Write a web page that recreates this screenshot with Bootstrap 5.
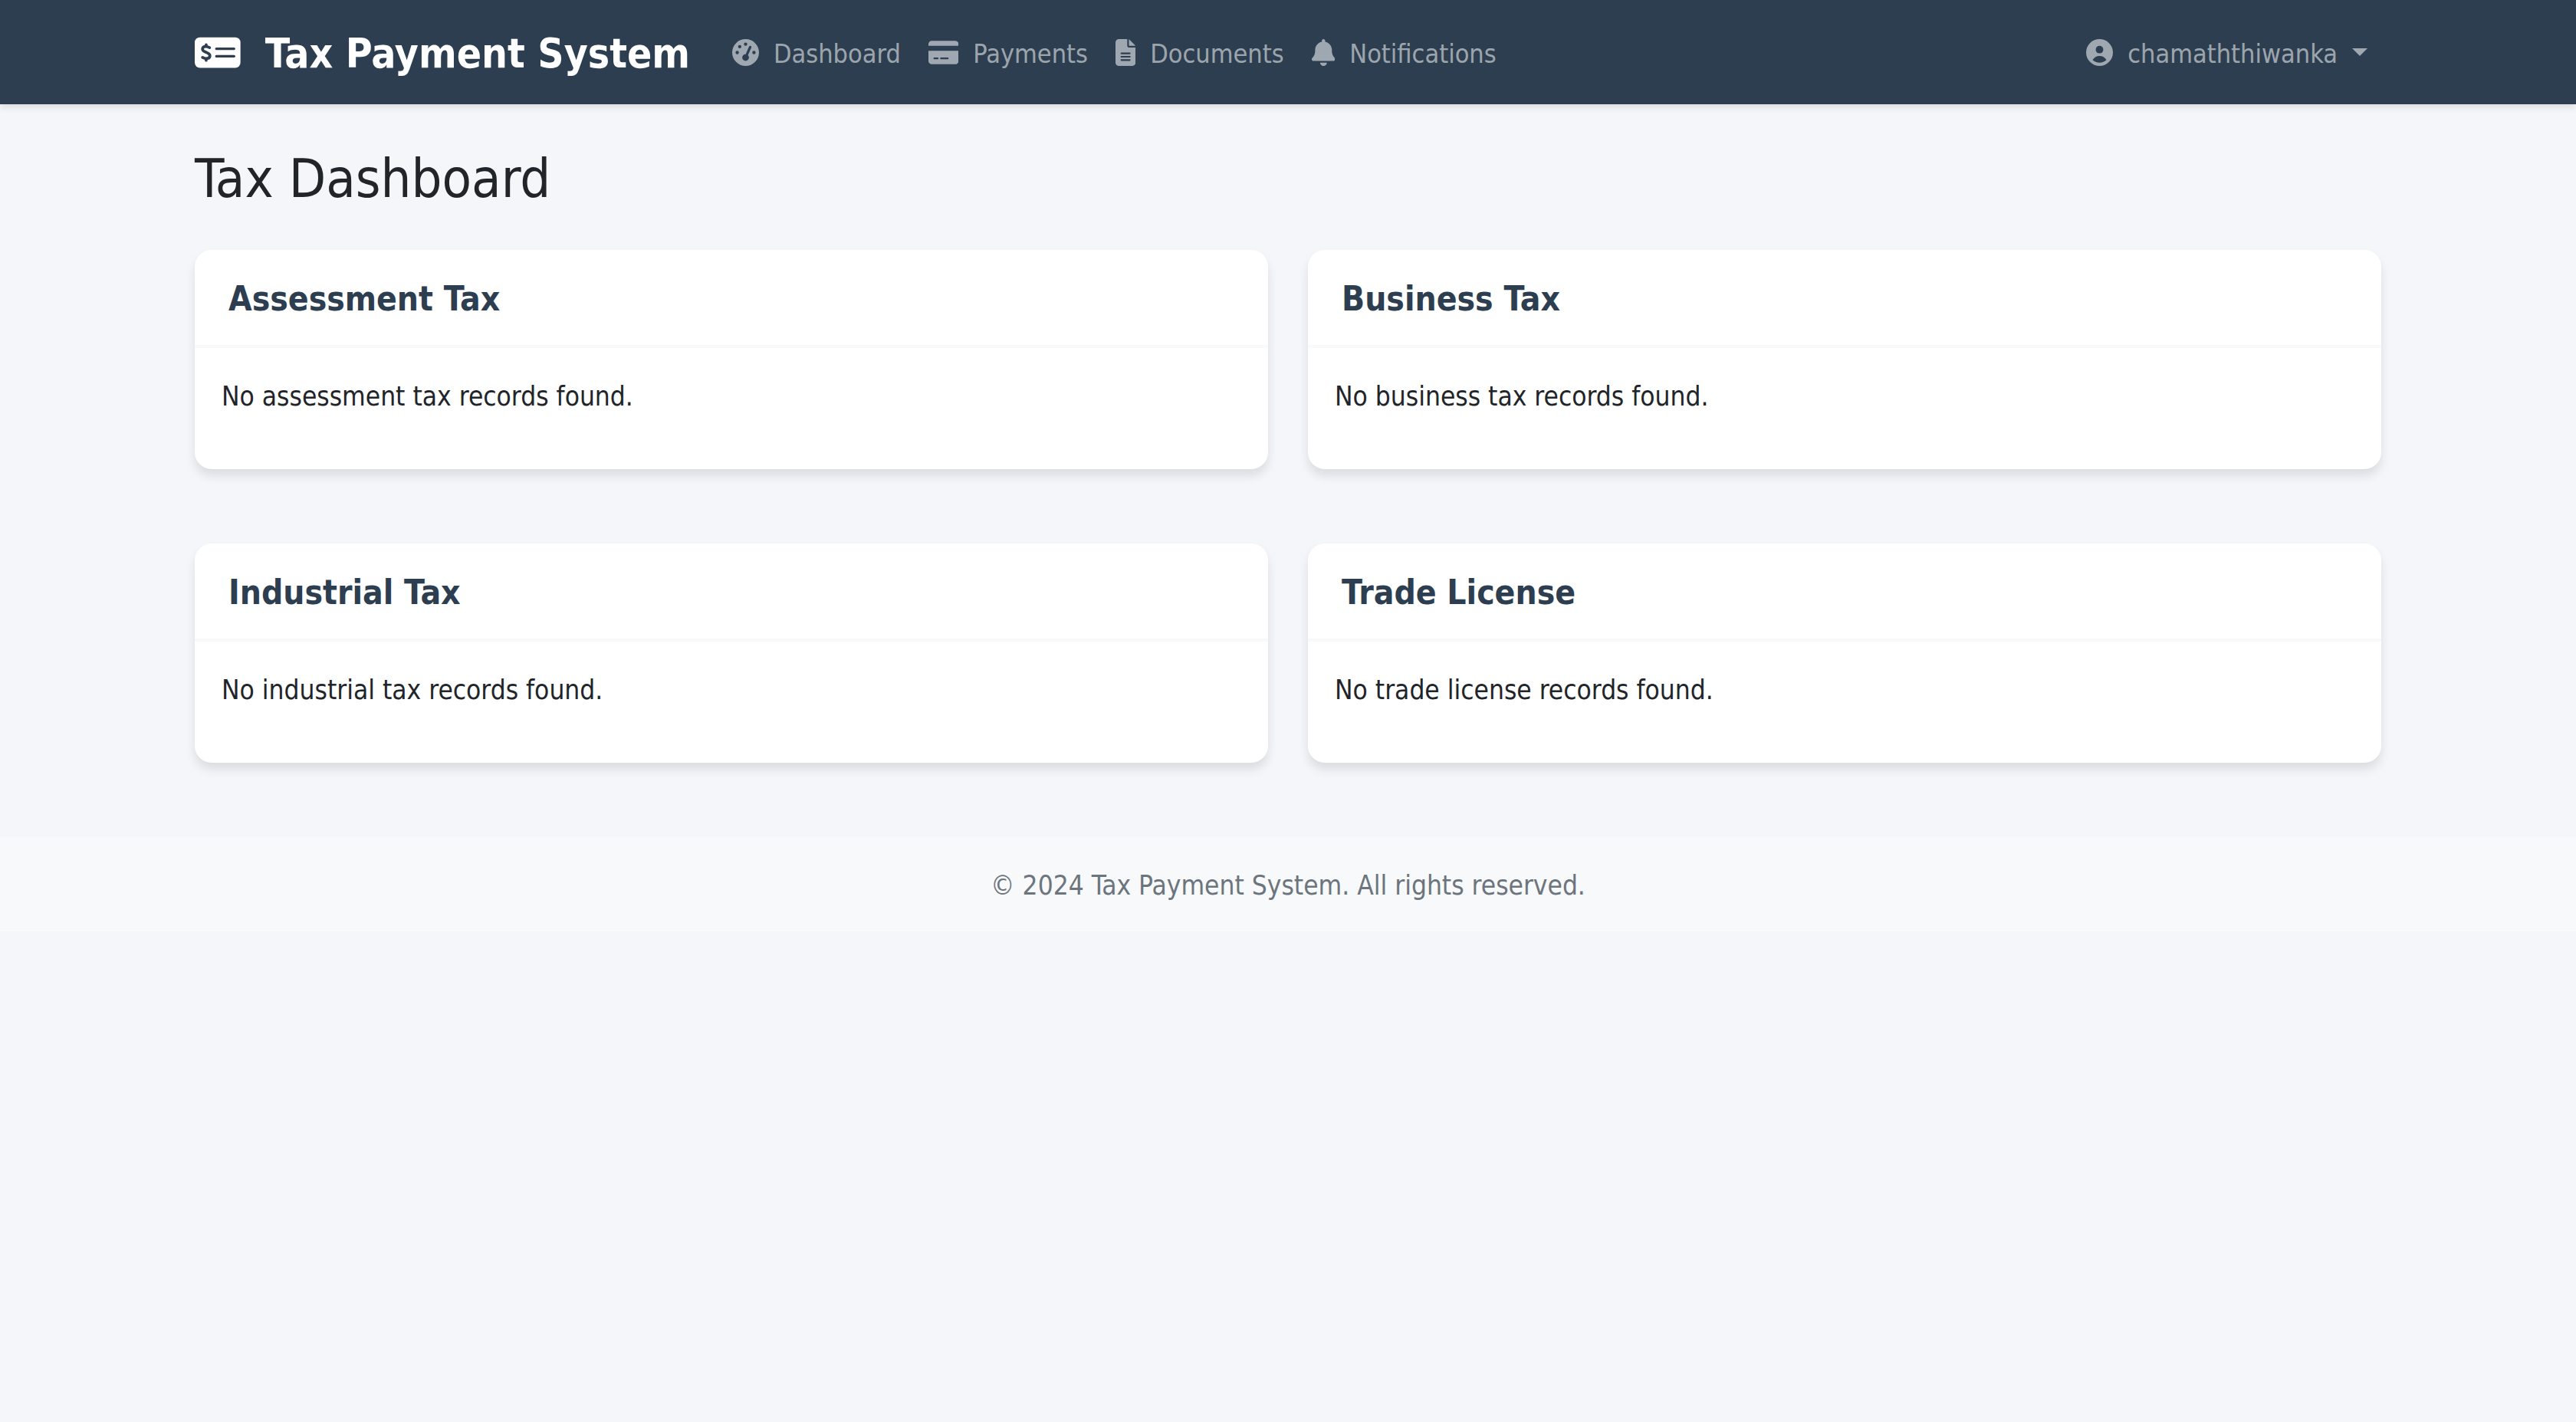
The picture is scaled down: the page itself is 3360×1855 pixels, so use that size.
<!DOCTYPE html>
<html lang="en">
<head>
<meta charset="utf-8">
<meta name="viewport" content="width=device-width, initial-scale=1">
<title>Tax Payment System</title>
<link href="https://cdn.jsdelivr.net/npm/bootstrap@5.3.0/dist/css/bootstrap.min.css" rel="stylesheet">
<script src="https://cdn.jsdelivr.net/npm/bootstrap@5.3.0/dist/js/bootstrap.bundle.min.js" defer></script>
<style>
:root { --ink: #2c3e50; }
body { font-family: "DejaVu Sans Condensed", "DejaVu Sans", sans-serif; font-size: 35px; line-height: 53px; background: #f5f6fa; }
.container { max-width: 2904px; padding-left: 26px; padding-right: 26px; }

.site-nav { --bs-navbar-color: rgba(255,255,255,.55); --bs-navbar-nav-link-padding-x: 18px; background: var(--ink); padding: 18px 0; box-shadow: 0 4px 9px rgba(0,0,0,.1); }
.site-nav .navbar-brand { font-size: 53px; line-height: 76px; font-weight: 700; padding: 10px 0; margin-right: 37px; gap: 32px; }
.site-nav .nav-link { font-size: 34px; padding-top: 16px; padding-bottom: 16px; gap: 19px; }
.site-nav a span { padding-top: 4px; }
.site-nav .dropdown-toggle::after { margin-left: 0; border-width: 10px 10px 0; }
.glyph { height: 35px; fill: currentColor; flex: none; }
.glyph-brand { height: 53px; }
.cut { fill: var(--ink); }
.cut-line { fill: none; stroke: var(--ink); stroke-linecap: round; }

.page-title { font-size: 70px; line-height: 84px; margin: 0; padding: 55px 0 51px; }
.tax-row { --bs-gutter-x: 52px; --bs-gutter-y: 97px; margin-bottom: 97px; }
.tax-card { border: 0; border-radius: 22px; box-shadow: 0 9px 13px rgba(0,0,0,.1); }
.tax-card .card-header { background: transparent; border-bottom: 4px solid #f8f9fa; padding: 37px 44px 34px; }
.tax-card .card-title { color: var(--ink); font-size: 44px; line-height: 53px; font-weight: 700; margin: 0; }
.tax-card .card-body { padding: 37px 35px 33px; color: #212529; }
.tax-card p { margin-bottom: 35px; }
.site-footer { background: #f8f9fa; color: #6c757d; padding: 37px 0 33px; }
</style>
</head>
<body>
<nav class="navbar navbar-expand-lg navbar-dark site-nav">
  <div class="container">
    <a class="navbar-brand d-flex align-items-center" href="#">
      <svg class="glyph glyph-brand" viewBox="0 0 576 512" aria-hidden="true">
        <rect y="64" width="576" height="384" rx="64"/>
        <path class="cut-line" stroke-width="31" d="M272 208H496M272 304H496"/>
        <path class="cut-line" stroke-width="36" d="M144 158v18M144 336v18M187 194C166 184 155 180 142 180C88 180 84 228 128 246L158 260C208 280 200 332 145 332C128 332 112 326 98 318"/>
      </svg>
      <span>Tax Payment System</span>
    </a>
    <button class="navbar-toggler" type="button" data-bs-toggle="collapse" data-bs-target="#mainNav" aria-controls="mainNav" aria-expanded="false" aria-label="Toggle navigation"><span class="navbar-toggler-icon"></span></button>
    <div class="collapse navbar-collapse" id="mainNav">
      <ul class="navbar-nav me-auto">
        <li class="nav-item"><a class="nav-link d-flex align-items-center" href="#">
          <svg class="glyph" viewBox="0 0 512 512" aria-hidden="true"><path d="M0 256a256 256 0 1 1 512 0A256 256 0 1 1 0 256zM288 96a32 32 0 1 0-64 0 32 32 0 1 0 64 0zM256 416c35.300 0 64-28.700 64-64c0-17.400-6.900-33.100-18.100-44.600L366 161.700c5.300-12.100-.2-26.300-12.300-31.600s-26.300 .2-31.600 12.300L257.900 288c-.6 0-1.300 0-1.900 0c-35.300 0-64 28.700-64 64s28.700 64 64 64zM176 144a32 32 0 1 0-64 0 32 32 0 1 0 64 0zM96 288a32 32 0 1 0 0-64 32 32 0 1 0 0 64zm352-32a32 32 0 1 0-64 0 32 32 0 1 0 64 0z"/></svg>
          <span>Dashboard</span></a></li>
        <li class="nav-item"><a class="nav-link d-flex align-items-center" href="#">
          <svg class="glyph" viewBox="0 0 576 512" aria-hidden="true"><path d="M64 32C28.700 32 0 60.700 0 96v32H576V96c0-35.300-28.700-64-64-64H64zM576 224H0V416c0 35.300 28.700 64 64 64H512c35.300 0 64-28.700 64-64V224zM112 352h64c8.800 0 16 7.200 16 16s-7.200 16-16 16H112c-8.800 0-16-7.200-16-16s7.200-16 16-16zm112 16c0-8.800 7.200-16 16-16H368c8.800 0 16 7.200 16 16s-7.200 16-16 16H240c-8.800 0-16-7.200-16-16z"/></svg>
          <span>Payments</span></a></li>
        <li class="nav-item"><a class="nav-link d-flex align-items-center" href="#">
          <svg class="glyph" viewBox="0 0 384 512" aria-hidden="true"><path d="M64 0C28.700 0 0 28.700 0 64V448c0 35.300 28.700 64 64 64H320c35.300 0 64-28.700 64-64V160H256c-17.700 0-32-14.300-32-32V0H64zM256 0V128H384L256 0zM112 256H272c8.800 0 16 7.200 16 16s-7.200 16-16 16H112c-8.800 0-16-7.200-16-16s7.200-16 16-16zm0 64H272c8.800 0 16 7.200 16 16s-7.200 16-16 16H112c-8.800 0-16-7.200-16-16s7.200-16 16-16zm0 64H272c8.800 0 16 7.200 16 16s-7.200 16-16 16H112c-8.800 0-16-7.200-16-16s7.200-16 16-16z"/></svg>
          <span>Documents</span></a></li>
        <li class="nav-item"><a class="nav-link d-flex align-items-center" href="#">
          <svg class="glyph" viewBox="0 0 448 512" aria-hidden="true"><path d="M224 0c-17.700 0-32 14.300-32 32V51.200C119 66 64 130.600 64 208v18.800c0 47-17.300 92.400-48.500 127.600l-7.400 8.300c-8.400 9.400-10.400 22.900-5.300 34.400S19.400 416 32 416H416c12.600 0 24-7.400 29.200-18.900s3.100-25-5.300-34.400l-7.400-8.300C401.300 319.200 384 273.900 384 226.800V208c0-77.400-55-142-128-156.800V32c0-17.700-14.300-32-32-32zm45.300 493.300c12-12 18.700-28.300 18.700-45.300H224 160c0 17 6.700 33.300 18.700 45.300s28.300 18.700 45.300 18.700s33.300-6.700 45.300-18.700z"/></svg>
          <span>Notifications</span></a></li>
      </ul>
      <ul class="navbar-nav">
        <li class="nav-item dropdown"><a class="nav-link dropdown-toggle d-flex align-items-center" href="#" role="button" data-bs-toggle="dropdown" aria-expanded="false">
          <svg class="glyph" viewBox="0 0 512 512" aria-hidden="true"><circle cx="256" cy="256" r="256"/><circle class="cut" cx="256" cy="200" r="72"/><path class="cut" d="M124 398C156 344 198 320 256 320S356 344 388 398C350 432 308 448 256 448S162 432 124 398z"/></svg>
          <span>chamaththiwanka</span></a></li>
      </ul>
    </div>
  </div>
</nav>

<main class="container">
  <h1 class="page-title">Tax Dashboard</h1>
  <div class="row tax-row">
    <div class="col-md-6">
      <section class="card tax-card">
        <div class="card-header"><h5 class="card-title">Assessment Tax</h5></div>
        <div class="card-body"><p>No assessment tax records found.</p></div>
      </section>
    </div>
    <div class="col-md-6">
      <section class="card tax-card">
        <div class="card-header"><h5 class="card-title">Business Tax</h5></div>
        <div class="card-body"><p>No business tax records found.</p></div>
      </section>
    </div>
    <div class="col-md-6">
      <section class="card tax-card">
        <div class="card-header"><h5 class="card-title">Industrial Tax</h5></div>
        <div class="card-body"><p>No industrial tax records found.</p></div>
      </section>
    </div>
    <div class="col-md-6">
      <section class="card tax-card">
        <div class="card-header"><h5 class="card-title">Trade License</h5></div>
        <div class="card-body"><p>No trade license records found.</p></div>
      </section>
    </div>
  </div>
</main>

<footer class="site-footer text-center">
  <div class="container"><span>© 2024 Tax Payment System. All rights reserved.</span></div>
</footer>
</body>
</html>
